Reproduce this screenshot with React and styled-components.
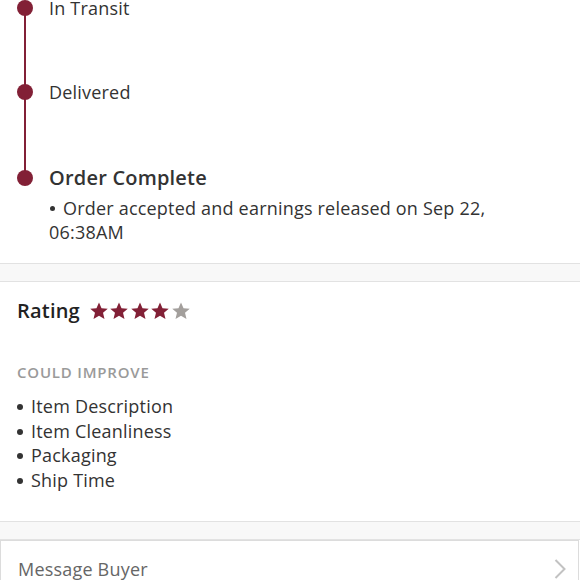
import React from 'react';
import styled, { createGlobalStyle } from 'styled-components';

const GlobalStyle = createGlobalStyle`
  html, body {
    margin: 0;
    padding: 0;
    background: #fff;
    overflow: hidden;
  }
  body {
    font-family: "Open Sans", Lato, sans-serif;
    color: #333;
    letter-spacing: 0.2px;
  }
`;

const maroon = '#822036';

const Page = styled.div`
  width: 580px;
  height: 580px;
  overflow: hidden;
`;

const Timeline = styled.div`
  display: flex;
  flex-direction: column;
  margin-top: -14px;
  padding-bottom: 19px;
`;

const Step = styled.div`
  position: relative;
  display: grid;
  grid-template-columns: 49px 1fr;
  min-height: ${p => p.height}px;
`;

const Rail = styled.div`
  position: relative;
  width: 49px;
`;

const Line = styled.div`
  position: absolute;
  left: 24px;
  top: 22px;
  bottom: -22px;
  width: 2px;
  background: ${maroon};
`;

const Dot = styled.div`
  position: absolute;
  left: 17px;
  top: 14px;
  width: 16px;
  height: 16px;
  border-radius: 50%;
  background: ${maroon};
`;

const StepBody = styled.div`
  display: flex;
  flex-direction: column;
`;

const StepTitle = styled.div`
  font-size: ${p => (p.bold ? 20 : 18)}px;
  font-weight: ${p => (p.bold ? 600 : 400)};
  line-height: 44px;
  color: #333;
`;

const StepNote = styled.div`
  font-size: 18px;
  line-height: 24px;
  color: #333;
  padding-right: 50px;
  margin-top: -4px;
`;

const Bullet = styled.span`
  display: inline-block;
  width: 5px;
  height: 5px;
  border-radius: 50%;
  background: #333;
  margin: 0 8px 3px 1px;
  vertical-align: middle;
`;

const Gap = styled.div`
  height: 17px;
  background: #f8f8f8;
  border-top: 1px solid #e2e2e2;
  border-bottom: 1px solid #e2e2e2;
`;

const RatingSection = styled.section`
  padding: 15px 17px 29px;
`;

const RatingRow = styled.div`
  display: flex;
  align-items: center;
  gap: 10px;
  height: 26px;
`;

const RatingLabel = styled.h2`
  margin: 0;
  font-size: 20px;
  font-weight: 600;
  color: #222;
`;

const Stars = styled.div`
  display: flex;
  gap: 2.5px;
  margin-top: 1px;
`;

const SubHead = styled.div`
  margin-top: 39px;
  font-size: 15px;
  font-weight: 600;
  letter-spacing: 0.8px;
  color: #9a9a9a;
`;

const List = styled.ul`
  list-style: none;
  margin: 12px 0 0;
  padding: 0;
`;

const Item = styled.li`
  display: flex;
  align-items: center;
  font-size: 18px;
  line-height: 24.5px;
  color: #333;
`;

const ItemDot = styled.span`
  width: 6px;
  height: 6px;
  border-radius: 50%;
  background: #333;
  margin: 2px 8px 0 0;
`;

const ActionRow = styled.div`
  display: flex;
  align-items: center;
  justify-content: space-between;
  height: 56px;
  margin: 0 1px 0 0;
  padding: 0 12px 4px 17px;
  border: 1px solid #dcdcdc;
  border-bottom: none;
  font-size: 18px;
  color: #666;
`;

const Star = ({ filled }) => (
  <svg width="18" height="18" viewBox="1 1.5 22 21">
    <path
      d="M12 1.5l3.1 7.1 7.6.6-5.8 5 1.8 7.5L12 17.7l-6.7 4 1.8-7.5-5.8-5 7.6-.6z"
      fill={filled ? maroon : '#a39f9c'}
    />
  </svg>
);

const Chevron = () => (
  <svg width="12" height="22" viewBox="0 0 12 22">
    <path d="M1.5 2l9 9-9 9" fill="none" stroke="#c2c2c2" strokeWidth="2" />
  </svg>
);

const steps = [
  { title: 'In Transit', height: 84, line: true },
  { title: 'Delivered', height: 86, line: true },
  {
    title: 'Order Complete',
    bold: true,
    note: 'Order accepted and earnings released on Sep 22, 06:38AM',
  },
];

const issues = ['Item Description', 'Item Cleanliness', 'Packaging', 'Ship Time'];

export default function App() {
  return (
    <Page>
      <GlobalStyle />
      <Timeline>
        {steps.map(s => (
          <Step key={s.title} height={s.height}>
            <Rail>
              {s.line && <Line />}
              <Dot />
            </Rail>
            <StepBody>
              <StepTitle bold={s.bold}>{s.title}</StepTitle>
              {s.note && (
                <StepNote>
                  <Bullet />
                  {s.note}
                </StepNote>
              )}
            </StepBody>
          </Step>
        ))}
      </Timeline>
      <Gap />
      <RatingSection>
        <RatingRow>
          <RatingLabel>Rating</RatingLabel>
          <Stars>
            {[1, 2, 3, 4, 5].map(n => (
              <Star key={n} filled={n <= 4} />
            ))}
          </Stars>
        </RatingRow>
        <SubHead>COULD IMPROVE</SubHead>
        <List>
          {issues.map(i => (
            <Item key={i}>
              <ItemDot />
              {i}
            </Item>
          ))}
        </List>
      </RatingSection>
      <Gap />
      <ActionRow>
        Message Buyer
        <Chevron />
      </ActionRow>
    </Page>
  );
}
